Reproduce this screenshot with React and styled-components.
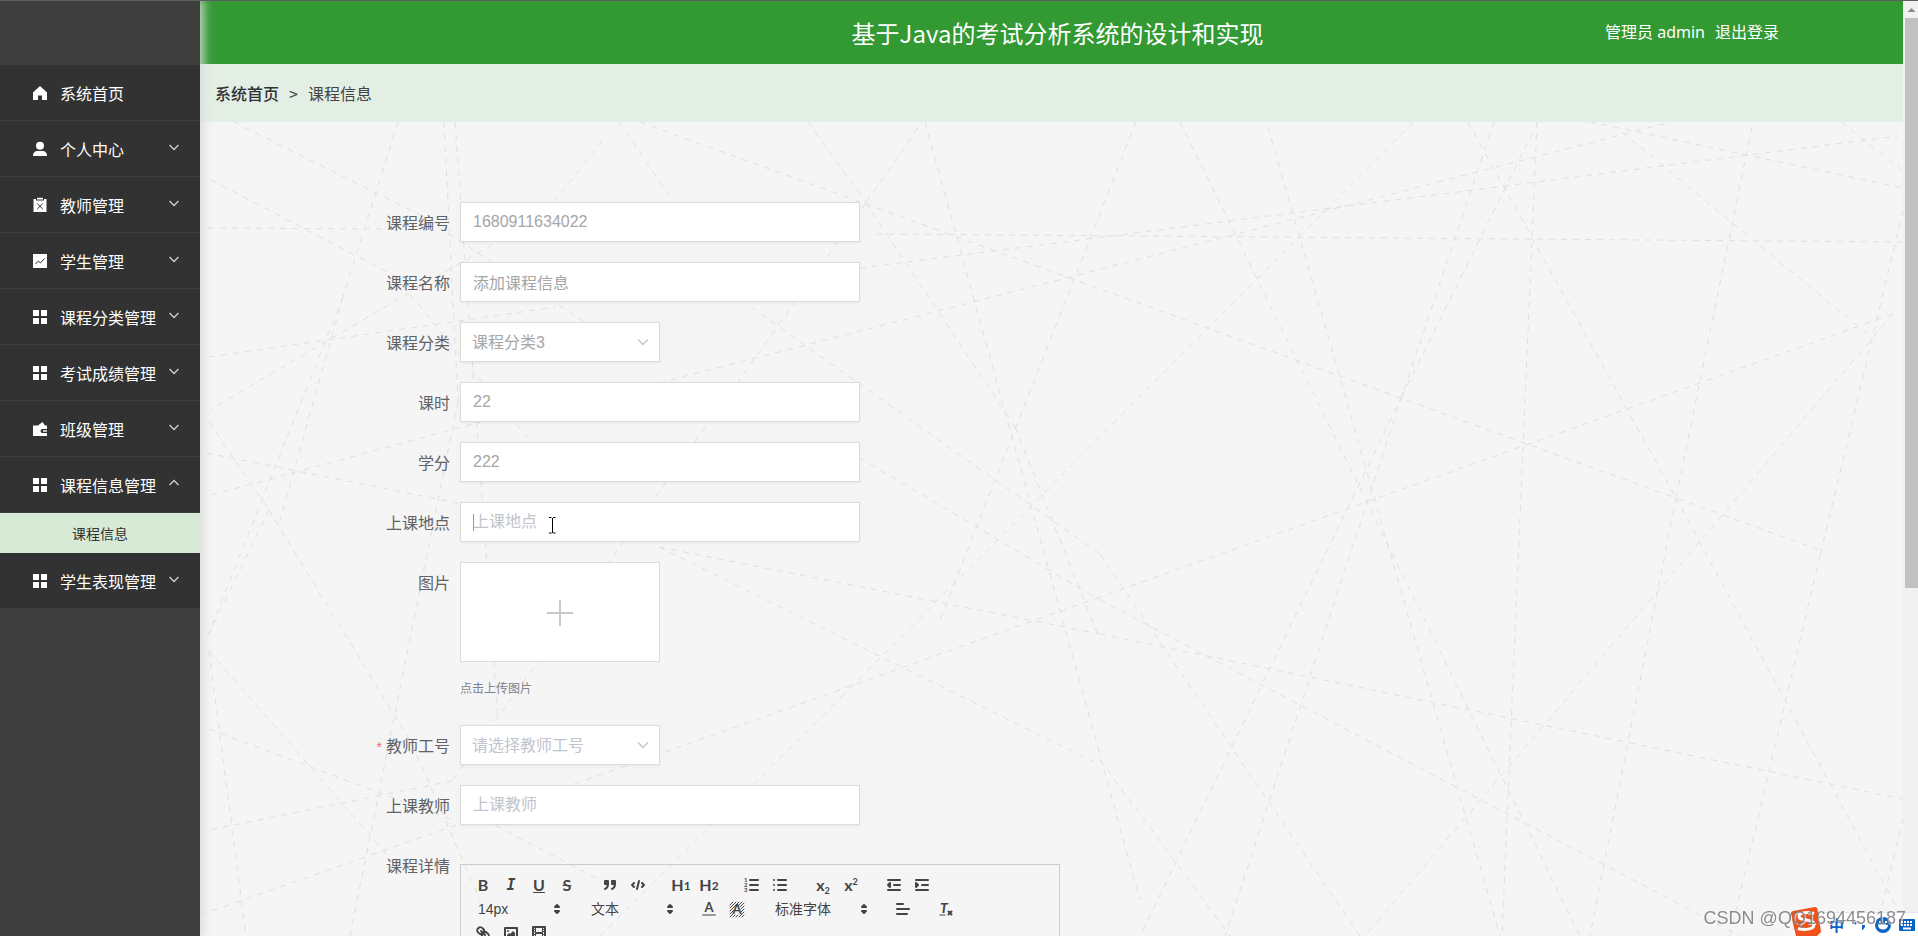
import React from 'react'
import styled, { createGlobalStyle, css } from 'styled-components'

const cjk = `'Noto Sans', 'Noto Sans CJK SC', sans-serif`
const cjkOnly = `'Noto Sans CJK SC', sans-serif`
const arial = `'Liberation Sans', 'Noto Sans CJK SC', sans-serif`

const GlobalStyle = createGlobalStyle`
    * { box-sizing: border-box }
    body { margin: 0; overflow: hidden; font-family: ${cjk}; font-size: 16px; color: #606266 }
    button, input, select { font-family: inherit; font-size: inherit; color: inherit }
`
const Container = styled.div`
    display: grid;
    grid-template-columns: 200px 1fr 15px;
    height: 100vh;
    overflow: hidden;
    border-top: 1px solid #5e5e5e;
    background: #f5f5f5;
`

/* sidebar */
const Sidebar = styled.nav`
    position: relative;
    z-index: 2;
    padding-top: 64px;
    background: #3f3f3f;
    box-shadow: 1px 0 10px 2px #dadada;
`
const Menu = styled.ul`
    list-style: none;
    margin: 0;
    padding: 0;
`
const MenuButton = styled.button`
    display: flex;
    align-items: center;
    width: 100%;
    height: 56px;
    padding: 0 20px 0 32px;
    border: 0;
    border-bottom: 1px solid #3f3f3f;
    background: #323232;
    color: #fff;
    font-family: ${cjkOnly};
    text-align: left;
    cursor: pointer;
    > svg:first-child { margin-right: 12px }
    span { flex: 1; white-space: nowrap }
`
const SubLink = styled.a`
    display: block;
    height: 40px;
    line-height: 40px;
    background: #d6ead6;
    color: #333;
    font-family: ${cjkOnly};
    font-size: 14px;
    text-align: center;
    text-decoration: none;
`

/* header */
const Main = styled.main`
    display: flex;
    flex-direction: column;
    min-width: 0;
    min-height: 0;
`
const Header = styled.header`
    display: grid;
    grid-template-columns: 1fr auto 1fr;
    align-items: center;
    flex: none;
    height: 63px;
    padding-left: 12px;
    background: #339933;
    color: #fff;
`
const Title = styled.h1`
    grid-column: 2;
    margin: 0;
    font-family: ${cjkOnly};
    font-size: 24px;
    font-weight: 400;
    line-height: 32px;
`
const UserBox = styled.div`
    display: flex;
    justify-content: flex-end;
    gap: 10px;
    padding: 0 124px 4px 0;
    a { color: #fff; text-decoration: none }
`
const Breadcrumb = styled.div`
    display: flex;
    align-items: center;
    flex: none;
    gap: 10px;
    height: 58px;
    padding: 0 15px 0 15px;
    background: #e3efe4;
    color: #444;
    font-family: ${cjkOnly};
    a { color: #303133; font-weight: 500; text-decoration: none }
`

/* form */
const Content = styled.section`
    position: relative;
    flex: 1;
    min-height: 0;
    overflow: hidden;
`
const Lines = styled.svg`
    position: absolute;
    top: 0;
    left: 0;
    width: 100%;
    height: 100%;
    fill: none;
    stroke: #e0e0e0;
    stroke-dasharray: 6 6;
`
const Form = styled.form`
    position: relative;
    padding: 80px 0 0 160px;
`
const Row = styled.div`
    display: flex;
    gap: 10px;
    margin-bottom: 20px;
`
const Label = styled.label`
    width: 90px;
    height: 40px;
    line-height: 40px;
    text-align: right;
    white-space: nowrap;
    font-family: ${cjkOnly};
    color: #606266;
    i { margin-right: 4px; color: #f56c6c; font-family: ${arial}; font-size: 14px; font-style: normal; line-height: 20px }
`
const field = css`
    height: 40px;
    padding: 0 12px;
    border: 1px solid #dcdcdc;
    border-radius: 0;
    outline: none;
    background: #fff;
    box-shadow: 0 1px 3px rgba(0, 0, 0, .06);
    color: #a6a6a6;
    font-family: ${arial};
`
const Input = styled.input`
    ${field}
    width: 400px;
    &::placeholder { color: #c0c4cc; opacity: 1 }
`
const Select = styled.select`
    ${field}
    width: 200px;
    padding: 0 11px;
    appearance: none;
    color: ${p => p.$empty ? '#c0c4cc' : '#a6a6a6'};
`
const FieldBox = styled.div`
    position: relative;
    display: flex;
`
const SelectArrow = styled.svg`
    position: absolute;
    right: 11px;
    top: 14px;
    pointer-events: none;
`
const Caret = styled.span`
    position: absolute;
    left: 13px;
    top: 12px;
    width: 1px;
    height: 17px;
    background: #999;
`
const Beam = styled.svg`
    position: absolute;
    left: 88px;
    top: 15px;
`
const UploadCard = styled.label`
    display: flex;
    align-items: center;
    justify-content: center;
    width: 200px;
    height: 100px;
    border: 1px solid #dcdcdc;
    background: #fff;
    cursor: pointer;
    input { position: absolute; width: 1px; height: 1px; opacity: 0 }
`
const Hint = styled.div`
    height: 33px;
    margin-top: 10px;
    line-height: 32px;
    color: #7d828c;
    font-family: ${cjkOnly};
    font-size: 12px;
`

/* rich text editor */
const Editor = styled.div`
    width: 600px;
    height: 300px;
    margin-top: 19px;
    border: 1px solid #ccc;
`
const Toolbar = styled.div`
    display: flex;
    flex-wrap: wrap;
    padding: 8px;
    color: #444;
`
const Group = styled.div`
    display: flex;
    margin-right: 15px;
`
const ToolButton = styled.button`
    display: flex;
    align-items: center;
    justify-content: center;
    width: 28px;
    height: 24px;
    padding: 0;
    border: 0;
    background: none;
    color: #444;
    font-family: Lato, sans-serif;
    font-size: 16px;
    font-weight: 700;
    line-height: 18px;
    cursor: pointer;
    svg { width: 18px; height: 18px; fill: none; stroke: #444; stroke-width: 2; stroke-linecap: round; stroke-linejoin: round }
    svg .fill { fill: #444 }
    svg .solid { fill: #444; stroke: none }
    svg text { fill: #444; stroke: none }
    small { font-size: 12px; line-height: 12px; align-self: flex-end; padding-bottom: 5px }
    sub, sup { font-size: 9px; line-height: 9px }
    sub { align-self: flex-end; padding-bottom: 2px }
    sup { align-self: flex-start; padding-top: 4px }
    em { font-family: 'DejaVu Sans Mono', monospace; font-size: 15px }
`
const Picker = styled.span`
    position: relative;
    display: flex;
    width: ${p => p.$width};
    select {
        width: 100%;
        height: 24px;
        padding: 0 9px;
        border: 0;
        outline: none;
        appearance: none;
        background: none;
        color: #444;
        font-family: ${arial};
        font-size: 14px;
    }
    svg { position: absolute; right: 1px; top: 3px; pointer-events: none; fill: #444; stroke: #444; stroke-width: 2; stroke-linejoin: round }
`

/* page scrollbar */
const Track = styled.div`
    display: flex;
    flex-direction: column;
    align-items: flex-end;
    background: #f1f1f1;
    svg { flex: none }
`
const Thumb = styled.div`
    width: 13px;
    height: 61%;
    background: #c1c1c1;
`

/* desktop overlays in the corner */
const ImeBar = styled.div`
    position: fixed;
    right: 0;
    bottom: 0;
    display: flex;
    align-items: flex-end;
`
const ImeKeys = styled.div`
    display: flex;
    align-items: center;
    gap: 6px;
    height: 24px;
    padding: 0 2px 0 7px;
    border-top: 1px solid #dfe6f2;
    background: #fff;
    color: #0a62c4;
    font-family: ${cjkOnly};
    font-size: 15px;
    font-weight: 700;
`
const Watermark = styled.div`
    position: fixed;
    right: 12px;
    bottom: 8px;
    color: rgba(120, 120, 120, .85);
    font-family: ${arial};
    font-size: 18px;
    line-height: 20px;
    text-shadow: 1px 1px 0 rgba(255, 255, 255, .7);
`

const icons = {
    home: <path d="M8 1 1 7.500V15h5v-4.500h4V15h5V7.500z" />,
    user: <><circle cx="8" cy="4.800" r="4" /><path d="M1 15c0-3.500 2-5 4.500-5h5c2.500 0 4.500 1.500 4.500 5z" /></>,
    release: <>
        <path d="M1.500 2H4v1.500h8V2h2.500v13h-13z" /><path d="M5 .8h6v1.700H5z" />
        <path d="m5.200 6.500 5.600 5.600m0-5.600-5.600 5.600" stroke="#323232" />
    </>,
    marketing: <><path d="M1 1h14v14H1z" /><path d="m3.500 11 2.800-3 2.200 2 4-4.500" stroke="#323232" fill="none" /></>,
    menu: <path d="M1 1h6v6H1zm8 0h6v6H9zM1 9h6v6H1zm8 0h6v6H9z" />,
    wallet: <>
        <path d="M1 4.500h5L10.500 1 13 4.500h2V8h-4.500a2 2 0 0 0 0 4H15v3H1z" />
        <path d="M11 9.300h4v1.400h-4z" />
    </>,
}

const menus = [
    { icon: 'home', name: '系统首页' },
    { icon: 'user', name: '个人中心', arrow: true },
    { icon: 'release', name: '教师管理', arrow: true },
    { icon: 'marketing', name: '学生管理', arrow: true },
    { icon: 'menu', name: '课程分类管理', arrow: true },
    { icon: 'menu', name: '考试成绩管理', arrow: true },
    { icon: 'wallet', name: '班级管理', arrow: true },
    { icon: 'menu', name: '课程信息管理', arrow: true, children: ['课程信息'] },
    { icon: 'menu', name: '学生表现管理', arrow: true },
]

// x1 y1 x2 y2 of every dashed line behind the form
const lines = [
    [877, 234, 1903, 242], [659, 383, 1671, 122], [860, 268, 1898, 136], [640, 122, 1822, 551],
    [1413, 122, 1100, 437], [1100, 437, 843, 695], [843, 695, 600, 936], [1893, 314, 1100, 597],
    [1100, 597, 671, 750], [671, 750, 200, 915], [1136, 122, 940, 620], [1180, 122, 1580, 936],
    [1268, 127, 1500, 936], [1494, 122, 1402, 396], [1402, 396, 1225, 936], [1538, 122, 1402, 396],
    [1402, 396, 1140, 936], [1537, 122, 1502, 936], [1468, 122, 1676, 498], [1676, 498, 1912, 936],
    [1752, 127, 1676, 498], [1676, 498, 1590, 936], [1903, 210, 1820, 556], [1820, 556, 1730, 936],
    [1893, 314, 1365, 936], [1590, 122, 1903, 188], [1622, 132, 1872, 338], [1841, 122, 1903, 171],
    [659, 547, 1100, 634], [1100, 634, 1903, 799], [860, 458, 1100, 600], [1100, 600, 1740, 936],
    [751, 307, 1100, 554], [1100, 554, 1360, 936], [659, 547, 1100, 765], [925, 122, 1140, 900],
    [1903, 818, 1875, 936], [1100, 760, 1230, 936], [234, 122, 418, 214], [418, 214, 602, 333],
    [211, 180, 395, 276], [395, 276, 527, 437], [398, 122, 343, 297], [343, 297, 206, 640],
    [444, 122, 458, 401], [458, 401, 350, 936], [455, 122, 498, 718], [208, 228, 384, 229],
    [619, 122, 671, 198], [602, 141, 544, 214], [544, 214, 211, 409], [808, 122, 866, 203],
    [866, 203, 1015, 427], [1015, 427, 1100, 640], [918, 128, 866, 203], [866, 203, 694, 443],
    [694, 443, 452, 781], [209, 357, 556, 307], [209, 422, 269, 510], [269, 510, 412, 744],
    [412, 744, 480, 900], [211, 495, 521, 411], [206, 453, 458, 503], [269, 510, 206, 640],
    [209, 651, 395, 864], [209, 729, 458, 822], [209, 651, 246, 936], [343, 297, 280, 520],
    [452, 781, 209, 830], [485, 820, 600, 880],
]

function Chevron({ up }) {
    return (
        <svg width="12" height="12" viewBox="0 0 12 12" fill="none" stroke="#cfcfcf">
            <path d={up ? 'm1.500 6 4.500-4.500L10.500 6' : 'm1.500 2 4.500 4.500 4.500-4.500'} strokeWidth="1.300" />
        </svg>
    )
}

function TextRow({ id, label, children, ...rest }) {
    return (
        <Row>
            <Label htmlFor={id}>{label}</Label>
            <FieldBox>
                <Input id={id} {...rest} />
                {children}
            </FieldBox>
        </Row>
    )
}

function SelectRow({ id, label, value, required, empty }) {
    return (
        <Row>
            <Label htmlFor={id}>{required && <i>*</i>}{label}</Label>
            <FieldBox>
                <Select id={id} $empty={empty}><option>{value}</option></Select>
                <SelectArrow width="12" height="12" viewBox="0 0 12 12" fill="none" stroke="#c0c4cc">
                    <path d="m1 3.500 5 5 5-5" strokeWidth="1.300" />
                </SelectArrow>
            </FieldBox>
        </Row>
    )
}

function Tool({ name, children }) {
    return <ToolButton type="button" aria-label={name}>{children}</ToolButton>
}

function Icon({ children }) {
    return <svg viewBox="0 0 18 18">{children}</svg>
}

function ToolPicker({ name, value, width }) {
    return (
        <Picker $width={width}>
            <select aria-label={name}><option>{value}</option></select>
            <svg width="18" height="18" viewBox="0 0 18 18">
                <path d="m7 11 2 2 2-2zM7 7l2-2 2 2z" />
            </svg>
        </Picker>
    )
}

function EditorToolbar() {
    return (
        <Toolbar>
            <Group>
                <Tool name="bold">B</Tool>
                <Tool name="italic"><em>I</em></Tool>
                <Tool name="underline"><u>U</u></Tool>
                <Tool name="strike"><s>S</s></Tool>
            </Group>
            <Group>
                <Tool name="blockquote">
                    <Icon>
                        <path className="fill" d="M4 5h3v3H4zM11 5h3v3h-3z" />
                        <path className="fill" d="M7 8c0 4-3 5-3 5M14 8c0 4-3 5-3 5" />
                    </Icon>
                </Tool>
                <Tool name="code">
                    <Icon><path d="M5 7 3 9l2 2M13 7l2 2-2 2M10 5 8 13" /></Icon>
                </Tool>
            </Group>
            <Group>
                <Tool name="header 1">H<small>1</small></Tool>
                <Tool name="header 2">H<small>2</small></Tool>
            </Group>
            <Group>
                <Tool name="ordered list">
                    <Icon>
                        <path d="M7 4h8M7 9h8M7 14h8" />
                        <text x="1" y="6" fontSize="6">1</text>
                        <text x="1" y="11" fontSize="6">2</text>
                        <text x="1" y="16" fontSize="6">3</text>
                    </Icon>
                </Tool>
                <Tool name="bullet list">
                    <Icon><path d="M7 4h8M7 9h8M7 14h8M3 4h0M3 9h0M3 14h0" /></Icon>
                </Tool>
            </Group>
            <Group>
                <Tool name="subscript">x<sub>2</sub></Tool>
                <Tool name="superscript">x<sup>2</sup></Tool>
            </Group>
            <Group>
                <Tool name="outdent">
                    <Icon><path d="M3 14h12M3 4h12M9 9h6" /><path className="fill" d="M5 7v4L3 9z" /></Icon>
                </Tool>
                <Tool name="indent">
                    <Icon><path d="M3 14h12M3 4h12M9 9h6" /><path className="fill" d="M3 7v4l2-2z" /></Icon>
                </Tool>
            </Group>
            <Group><ToolPicker name="size" value="14px" width="98px" /></Group>
            <Group><ToolPicker name="header" value="文本" width="98px" /></Group>
            <Group>
                <Tool name="color">
                    <Icon>
                        <path d="M3 15h12" stroke="#999" />
                        <text x="9" y="12" fontSize="13" textAnchor="middle">A</text>
                    </Icon>
                </Tool>
                <Tool name="background">
                    <Icon>
                        <path
                            d="M2 5l3-3M2 8l6-6M2 11l9-9M2 14l4-4M10 6l4-4M2 17l4-4M12 7l4-4M5 17l2-2M13 9l3-3M8 17l2-2M13 12l3-3M11 17l5-5M14 17l2-2"
                            strokeWidth="1"
                        />
                        <text x="9" y="14" fontSize="13" textAnchor="middle">A</text>
                    </Icon>
                </Tool>
            </Group>
            <Group><ToolPicker name="font" value="标准字体" width="108px" /></Group>
            <Group>
                <Tool name="align">
                    <Icon><path d="M3 4h6M3 9h12M3 14h10" /></Icon>
                </Tool>
            </Group>
            <Group>
                <Tool name="clean">
                    <Icon>
                        <text x="3" y="13" fontSize="14" fontStyle="italic">T</text>
                        <path d="M3 15h5" strokeWidth="1" />
                        <path d="m11.500 11.500 3 3m0-3-3 3" />
                    </Icon>
                </Tool>
            </Group>
            <Group>
                <Tool name="link">
                    <Icon>
                        <path d="m7 7 4 4" />
                        <path d="M8.900 4.577a3.476 3.476 0 0 1 .36 4.679A3.476 3.476 0 0 1 4.577 8.900C3.185 7.500 2.035 6.400 4.217 4.217S7.500 3.185 8.900 4.577Z" />
                        <path d="M13.423 9.100a3.476 3.476 0 0 0-4.679-.36 3.476 3.476 0 0 0 .36 4.679c1.392 1.392 2.500 2.542 4.679.36S14.815 10.500 13.423 9.100Z" />
                    </Icon>
                </Tool>
                <Tool name="image">
                    <Icon>
                        <path d="M3 4h12v10H3z" />
                        <circle className="solid" cx="6" cy="7" r="1" />
                        <path className="solid" d="M5 12v-1l2-2 1 1 3-3 2 2v3z" />
                    </Icon>
                </Tool>
                <Tool name="video">
                    <Icon>
                        <path d="M3 3h12v12H3z" />
                        <path className="solid" d="M5 3h1v12H5zM12 3h1v12h-1zM5 8h8v2H5zM3 5h3v1H3zM3 7h3v1H3zM3 10h3v1H3zM3 12h3v1H3zM12 5h3v1h-3zM12 7h3v1h-3zM12 10h3v1h-3zM12 12h3v1h-3z" />
                    </Icon>
                </Tool>
            </Group>
        </Toolbar>
    )
}

export default function App() {
    return (
        <Container>
            <GlobalStyle />
            <Sidebar>
                <Menu>
                    {menus.map(item => (
                        <li key={item.name}>
                            <MenuButton type="button">
                                <svg width="16" height="16" viewBox="0 0 16 16" fill="#fff">{icons[item.icon]}</svg>
                                <span>{item.name}</span>
                                {item.arrow && <Chevron up={!!item.children} />}
                            </MenuButton>
                            {item.children?.map(child => <SubLink href="#" key={child}>{child}</SubLink>)}
                        </li>
                    ))}
                </Menu>
            </Sidebar>
            <Main>
                <Header>
                    <Title>基于Java的考试分析系统的设计和实现</Title>
                    <UserBox>
                        <span>管理员 admin</span>
                        <a href="#">退出登录</a>
                    </UserBox>
                </Header>
                <Breadcrumb>
                    <a href="#">系统首页</a>
                    <span>&gt;</span>
                    <span>课程信息</span>
                </Breadcrumb>
                <Content>
                    <Lines viewBox="200 122 1703 814" preserveAspectRatio="xMinYMin slice">
                        {lines.map(([x1, y1, x2, y2], i) => <line key={i} x1={x1} y1={y1} x2={x2} y2={y2} />)}
                    </Lines>
                    <Form>
                        <TextRow id="code" label="课程编号" defaultValue="1680911634022" />
                        <TextRow id="name" label="课程名称" defaultValue="添加课程信息" />
                        <SelectRow id="type" label="课程分类" value="课程分类3" />
                        <TextRow id="hours" label="课时" defaultValue="22" />
                        <TextRow id="credit" label="学分" defaultValue="222" />
                        <TextRow id="place" label="上课地点" placeholder="上课地点">
                            <Caret />
                            <Beam width="8" height="17" viewBox="0 0 8 17" fill="none" stroke="#000">
                                <path d="M1 .5h2.500M5 .5h2.500M1 16h2.500M5 16h2.500M4.500 1v15" />
                            </Beam>
                        </TextRow>
                        <Row>
                            <Label htmlFor="picture">图片</Label>
                            <div>
                                <UploadCard>
                                    <input id="picture" type="file" aria-label="图片" />
                                    <svg width="28" height="28" viewBox="0 0 28 28" stroke="#c8c8c8" strokeWidth="2">
                                        <path d="M1 15h26M14 2v26" />
                                    </svg>
                                </UploadCard>
                                <Hint>点击上传图片</Hint>
                            </div>
                        </Row>
                        <SelectRow id="teacherNo" label="教师工号" value="请选择教师工号" required empty />
                        <TextRow id="teacher" label="上课教师" placeholder="上课教师" />
                        <Row>
                            <Label as="span">课程详情</Label>
                            <Editor><EditorToolbar /></Editor>
                        </Row>
                    </Form>
                </Content>
            </Main>
            <Track>
                <svg width="13" height="17" viewBox="0 0 13 17"><path d="m2.500 11 4-4 4 4z" fill="#8a8a8a" /></svg>
                <Thumb />
            </Track>
            <ImeBar>
                <svg width="32" height="30" viewBox="0 0 32 30">
                    <path d="M3 5 25 1q2 0 2.500 2L31 26l-4 4H6L1 9Q0 6 3 5z" fill="#f1511b" />
                    <path d="M24 7.500c-6-2-15-1-15 3 0 5 15 2 15 8 0 5-10 6-16 4" fill="none" stroke="#fff" strokeWidth="3" />
                </svg>
                <ImeKeys>
                    <span>中</span>
                    <svg width="18" height="18" viewBox="0 0 18 18" fill="#0a62c4">
                        <circle cx="5" cy="7" r="1.500" /><path d="M12 9h3c0 3-1 4-3 5z" />
                    </svg>
                    <svg width="18" height="18" viewBox="0 0 18 18">
                        <circle cx="9" cy="9" r="8" fill="#0a62c4" />
                        <path d="M4 9h10c0 6-10 6-10 0zM5 5h2v2H5zM11 5h2v2h-2z" fill="#fff" />
                    </svg>
                    <svg width="18" height="18" viewBox="0 0 18 18">
                        <rect x="1" y="3" width="16" height="12" rx="1" fill="#0a62c4" />
                        <path d="M3 6h12M3 9h12" stroke="#fff" strokeWidth="2" strokeDasharray="2 1" />
                        <path d="M5 12.500h8" stroke="#fff" strokeWidth="2" />
                    </svg>
                </ImeKeys>
            </ImeBar>
            <Watermark>CSDN @QQ1694456187</Watermark>
        </Container>
    )
}
